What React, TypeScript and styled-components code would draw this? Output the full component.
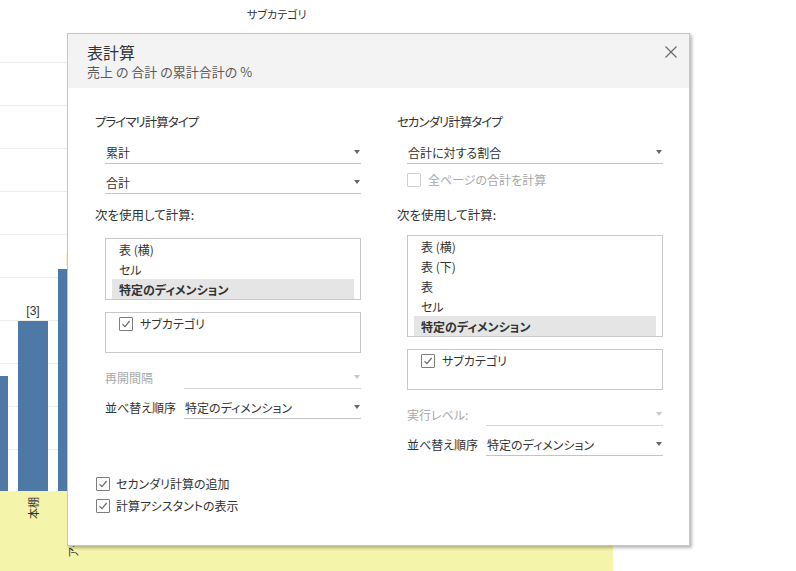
import React from "react";
import styled, { createGlobalStyle } from "styled-components";

const Global = createGlobalStyle`
  html, body { margin: 0; padding: 0; background: #fff; }
  body {
    font-family: "Noto Sans CJK JP", "Noto Sans", sans-serif;
    font-feature-settings: "palt";
    color: #333;
  }
`;

const Screen = styled.div`
  position: relative;
  width: 796px;
  height: 571px;
  overflow: hidden;
  background: #fff;
`;

/* ---------- background chart ---------- */
const Chart = styled.div`
  display: flex;
  flex-direction: column;
  width: 613px;
  height: 571px;
`;

const ChartTitle = styled.div`
  height: 12px;
  padding: 8px 0 0 247px;
  font-size: 11px;
  line-height: 12px;
  color: #333;
`;

const Plot = styled.div`
  height: 471px;
  overflow: hidden;
  background: repeating-linear-gradient(
    to bottom,
    transparent 0,
    transparent 42px,
    #ececec 42px,
    #ececec 43px
  );
`;

const BarRow = styled.div`
  display: flex;
  align-items: flex-end;
  gap: 10px;
  height: 100%;
  margin-left: -22px;
`;

const BarCol = styled.div`
  width: 30px;
  display: flex;
  flex-direction: column;
  align-items: center;
`;

const BarLabel = styled.div`
  font-family: "Liberation Sans", Arial, sans-serif;
  font-size: 12px;
  line-height: 14px;
  height: 14px;
  margin-bottom: 3px;
  color: #333;
  white-space: nowrap;
`;

const Bar = styled.div`
  width: 30px;
  background: #4e79a7;
`;

const Axis = styled.div`
  height: 80px;
  background: #f4f4ab;
  overflow: hidden;
`;

const AxisRow = styled.div`
  display: flex;
  align-items: flex-start;
  gap: 10px;
  margin-left: -22px;
`;

const AxisCell = styled.div`
  width: 30px;
  display: flex;
  justify-content: center;
  align-items: flex-start;
  padding-top: 6px;
`;

const AxisText = styled.span`
  writing-mode: vertical-rl;
  text-orientation: sideways;
  transform: rotate(180deg);
  font-size: 11px;
  line-height: 12px;
  color: #333;
  white-space: nowrap;
`;

/* ---------- dialog ---------- */
const Dialog = styled.div`
  position: absolute;
  left: 67px;
  top: 33px;
  width: 623px;
  height: 513px;
  box-sizing: border-box;
  border: 1px solid #c6c6c6;
  background: #fff;
  box-shadow: 2px 2px 3px rgba(0, 0, 0, 0.28);
  display: flex;
  flex-direction: column;
`;

const Header = styled.div`
  height: 54px;
  box-sizing: border-box;
  background: #f3f3f3;
  padding: 8px 12px 0 19px;
  display: flex;
  justify-content: space-between;
  align-items: flex-start;
`;

const Titles = styled.div`
  display: flex;
  flex-direction: column;
`;

const Title = styled.div`
  font-size: 16px;
  line-height: 20px;
  color: #333;
`;

const Subtitle = styled.div`
  margin-top: 1px;
  font-size: 13px;
  line-height: 18px;
  color: #5a5a5a;
`;

const CloseButton = styled.button`
  border: 0;
  background: none;
  padding: 0;
  margin-top: 4px;
  width: 12px;
  height: 12px;
  display: flex;
  cursor: pointer;
`;

const Body = styled.div`
  display: grid;
  grid-template-columns: 266px 266px;
  column-gap: 36px;
  align-items: start;
  padding: 26px 27px 0 27px;
`;

const Column = styled.div`
  display: flex;
  flex-direction: column;
`;

const SectionLabel = styled.div<{ $mt?: number; $tight?: boolean }>`
  margin-top: ${(p) => p.$mt ?? 0}px;
  font-size: 12.5px;
  line-height: 16px;
  height: 16px;
  letter-spacing: ${(p) => (p.$tight ? "-1px" : "0")};
  color: #333;
`;

const SelectBox = styled.div<{ $mt?: number; $disabled?: boolean; $indent?: boolean; $grow?: boolean }>`
  margin-top: ${(p) => p.$mt ?? 0}px;
  margin-left: ${(p) => (p.$indent ? 10 : 0)}px;
  flex: ${(p) => (p.$grow ? "1 1 auto" : "0 0 auto")};
  height: 23px;
  box-sizing: border-box;
  border-bottom: 1px solid ${(p) => (p.$disabled ? "#d6d6d6" : "#c4c4c4")};
  padding: 0 1px 0 1px;
  display: flex;
  align-items: center;
  justify-content: space-between;
  font-size: 12px;
  color: #333;
`;

const Arrow = styled.span<{ $disabled?: boolean }>`
  width: 0;
  height: 0;
  border-left: 3.5px solid transparent;
  border-right: 3.5px solid transparent;
  border-top: 4px solid ${(p) => (p.$disabled ? "#c8c8c8" : "#666")};
`;

const FieldRow = styled.div<{ $mt?: number }>`
  margin-top: ${(p) => p.$mt ?? 0}px;
  margin-left: 10px;
  display: flex;
  align-items: flex-end;
  height: 23px;
`;

const FieldLabel = styled.div<{ $disabled?: boolean }>`
  width: 79px;
  flex-shrink: 0;
  height: 23px;
  display: flex;
  align-items: center;
  font-size: 12px;
  color: ${(p) => (p.$disabled ? "#a8a8a8" : "#333")};
`;

const ListBox = styled.div<{ $mt?: number }>`
  margin-top: ${(p) => p.$mt ?? 0}px;
  margin-left: 10px;
  border: 1px solid #c8c8c8;
  padding: 0 6px;
  display: flex;
  flex-direction: column;
`;

const ListItem = styled.div<{ $selected?: boolean }>`
  height: 20px;
  display: flex;
  align-items: center;
  padding-left: 7px;
  font-size: 12px;
  color: #333;
  font-weight: ${(p) => (p.$selected ? 700 : 400)};
  background: ${(p) => (p.$selected ? "#e5e5e5" : "transparent")};
`;

const CheckList = styled.div<{ $mt?: number }>`
  margin-top: ${(p) => p.$mt ?? 0}px;
  margin-left: 10px;
  height: 41px;
  box-sizing: border-box;
  border: 1px solid #c8c8c8;
  padding: 3px 0 0 13px;
`;

const CheckRow = styled.label<{ $mt?: number; $indent?: boolean; $gap?: number }>`
  margin-top: ${(p) => p.$mt ?? 0}px;
  margin-left: ${(p) => (p.$indent ? 10 : 0)}px;
  height: 16px;
  display: flex;
  align-items: center;
  gap: ${(p) => p.$gap ?? 7}px;
`;

const Box = styled.span<{ $disabled?: boolean }>`
  width: 14px;
  height: 14px;
  box-sizing: border-box;
  border: 1px solid ${(p) => (p.$disabled ? "#d0d0d0" : "#7d7d7d")};
  border-radius: 1px;
  display: flex;
  align-items: center;
  justify-content: center;
  background: #fff;
`;

const CheckText = styled.span<{ $disabled?: boolean }>`
  font-size: 12px;
  line-height: 16px;
  color: ${(p) => (p.$disabled ? "#a8a8a8" : "#333")};
`;

const Footer = styled.div`
  margin-top: 20px;
  padding-left: 28px;
  display: flex;
  flex-direction: column;
  gap: 6px;
`;

/* ---------- pieces ---------- */
function Check({ checked, disabled }: { checked?: boolean; disabled?: boolean }) {
  return (
    <Box $disabled={disabled}>
      {checked && (
        <svg width="10" height="10" viewBox="0 0 10 10">
          <path d="M1.5 5.2 L4 7.6 L8.6 2" fill="none" stroke="#6a6a6a" strokeWidth="1.2" />
        </svg>
      )}
    </Box>
  );
}

function CheckItem({
  label,
  checked,
  disabled,
  mt,
  indent,
  gap,
}: {
  label: string;
  checked?: boolean;
  disabled?: boolean;
  mt?: number;
  indent?: boolean;
  gap?: number;
}) {
  return (
    <CheckRow $mt={mt} $indent={indent} $gap={gap}>
      <Check checked={checked} disabled={disabled} />
      <CheckText $disabled={disabled}>{label}</CheckText>
    </CheckRow>
  );
}

function Select({
  value,
  mt,
  disabled,
  indent,
  grow,
}: {
  value?: string;
  mt?: number;
  disabled?: boolean;
  indent?: boolean;
  grow?: boolean;
}) {
  return (
    <SelectBox $mt={mt} $disabled={disabled} $indent={indent} $grow={grow}>
      <span>{value}</span>
      <Arrow $disabled={disabled} />
    </SelectBox>
  );
}

function Field({
  label,
  value,
  mt,
  disabled,
}: {
  label: string;
  value?: string;
  mt?: number;
  disabled?: boolean;
}) {
  return (
    <FieldRow $mt={mt}>
      <FieldLabel $disabled={disabled}>{label}</FieldLabel>
      <Select grow value={value} disabled={disabled} />
    </FieldRow>
  );
}

const bars = [
  { id: "a", label: "", height: 115, axis: "" },
  { id: "b", label: "[3]", height: 170, axis: "本棚" },
  { id: "c", label: "[2]", height: 222, axis: "アクセサリー" },
];

export default function App() {
  return (
    <>
      <Global />
      <Screen>
        <Chart>
          <ChartTitle>サブカテゴリ</ChartTitle>
          <Plot>
            <BarRow>
              {bars.map((b) => (
                <BarCol key={b.id}>
                  <BarLabel>{b.label}</BarLabel>
                  <Bar style={{ height: b.height }} />
                </BarCol>
              ))}
            </BarRow>
          </Plot>
          <Axis>
            <AxisRow>
              {bars.map((b) => (
                <AxisCell key={b.id}>
                  <AxisText>{b.axis}</AxisText>
                </AxisCell>
              ))}
            </AxisRow>
          </Axis>
        </Chart>

        <Dialog>
          <Header>
            <Titles>
              <Title>表計算</Title>
              <Subtitle>売上 の 合計 の累計合計の %</Subtitle>
            </Titles>
            <CloseButton aria-label="閉じる">
              <svg width="12" height="12" viewBox="0 0 12 12">
                <path d="M0.5 0.5 L11.5 11.5 M11.5 0.5 L0.5 11.5" stroke="#666" strokeWidth="1.1" />
              </svg>
            </CloseButton>
          </Header>

          <Body>
            <Column>
              <SectionLabel $tight>プライマリ計算タイプ</SectionLabel>
              <Select mt={11} indent value="累計" />
              <Select mt={7} indent value="合計" />
              <SectionLabel $mt={13}>次を使用して計算:</SectionLabel>
              <ListBox $mt={15}>
                <ListItem>表 (横)</ListItem>
                <ListItem>セル</ListItem>
                <ListItem $selected>特定のディメンション</ListItem>
              </ListBox>
              <CheckList $mt={12}>
                <CheckItem checked label="サブカテゴリ" />
              </CheckList>
              <Field mt={13} disabled label="再開間隔" />
              <Field mt={7} label="並べ替え順序" value="特定のディメンション" />
            </Column>

            <Column>
              <SectionLabel $tight>セカンダリ計算タイプ</SectionLabel>
              <Select mt={11} indent value="合計に対する割合" />
              <CheckItem mt={8} indent disabled label="全ページの合計を計算" />
              <SectionLabel $mt={19}>次を使用して計算:</SectionLabel>
              <ListBox $mt={12}>
                <ListItem>表 (横)</ListItem>
                <ListItem>表 (下)</ListItem>
                <ListItem>表</ListItem>
                <ListItem>セル</ListItem>
                <ListItem $selected>特定のディメンション</ListItem>
              </ListBox>
              <CheckList $mt={12}>
                <CheckItem checked label="サブカテゴリ" />
              </CheckList>
              <Field mt={13} disabled label="実行レベル:" />
              <Field mt={7} label="並べ替え順序" value="特定のディメンション" />
            </Column>
          </Body>

          <Footer>
            <CheckItem checked gap={6} label="セカンダリ計算の追加" />
            <CheckItem checked gap={6} label="計算アシスタントの表示" />
          </Footer>
        </Dialog>
      </Screen>
    </>
  );
}
